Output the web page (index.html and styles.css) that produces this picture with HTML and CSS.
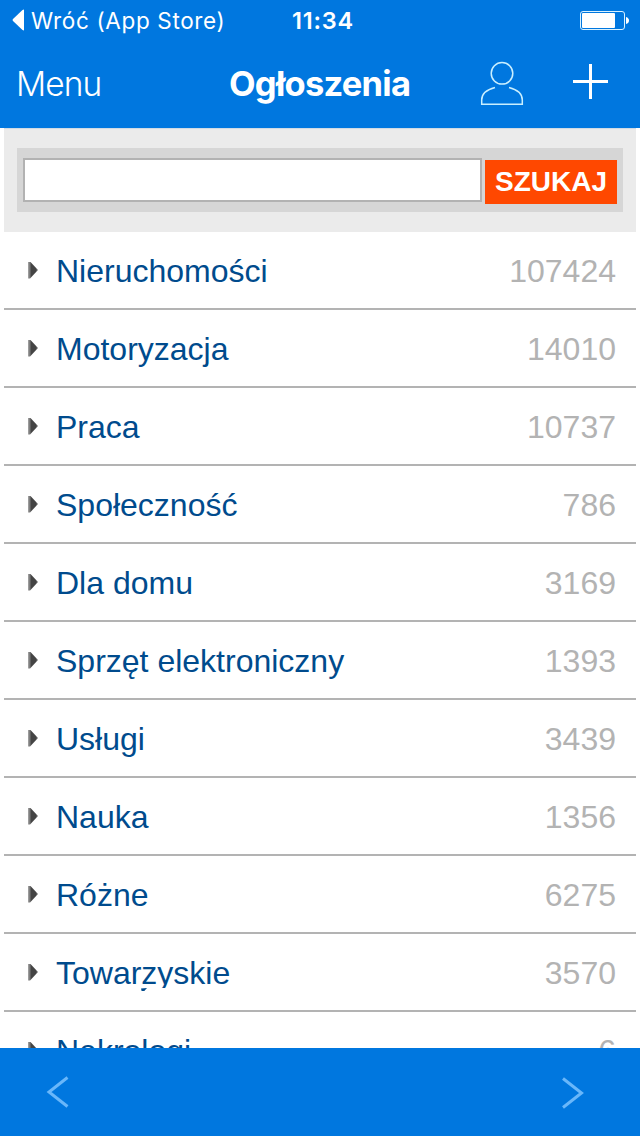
FILE: index.html
```html
<!DOCTYPE html>
<html lang="pl">
<head>
<meta charset="utf-8">
<title>Ogłoszenia</title>
<link rel="stylesheet" href="styles.css">
</head>
<body>
<div class="app">
  <header class="header">
    <div class="status">
      <div class="back"><svg width="12" height="22" viewBox="0 0 12 22"><path d="M12 .5v21L10.500 21 1 12q-1-1 0-2L10.500 1z" fill="#fff"/></svg><span class="back-text">Wróć (App Store)</span></div>
      <span class="time">11:34</span>
      <svg class="battery" width="50" height="20" viewBox="0 0 50 20"><rect x=".5" y=".5" width="44" height="18" rx="2.500" fill="none" stroke="#d8f1ff"/><rect x="2" y="2" width="33" height="15" rx="1" fill="#fff"/><path d="M46 6q3 1 3 3.500T46 13z" fill="#fff"/></svg>
    </div>
    <nav class="nav">
      <span class="menu">Menu</span>
      <h1 class="title">Ogłoszenia</h1>
      <div class="actions">
        <svg width="44" height="44" viewBox="0 0 44 44" fill="none" stroke="#c9efff" stroke-width="1.500"><circle cx="22" cy="12.300" r="10.800"/><path d="M15 26.500C7 28.500 1.700 33 1.700 39v4.200h40.600V39c0-6-5.300-10.500-13.300-12.500"/></svg>
        <svg width="36" height="36" viewBox="0 0 36 36" fill="none" stroke="#fff" stroke-width="3"><path d="M0 18.500h35M17.500 1v35"/></svg>
      </div>
    </nav>
  </header>
  <main class="content">
    <form class="search">
      <div class="search-box"><input class="field" type="text" aria-label="Szukaj"><button class="submit" type="button">SZUKAJ</button></div>
    </form>
    <ul class="list">
      <li class="row"><i class="arrow"></i><span class="name">Nieruchomości</span><span class="count">107424</span></li>
      <li class="row"><i class="arrow"></i><span class="name">Motoryzacja</span><span class="count">14010</span></li>
      <li class="row"><i class="arrow"></i><span class="name">Praca</span><span class="count">10737</span></li>
      <li class="row"><i class="arrow"></i><span class="name">Społeczność</span><span class="count">786</span></li>
      <li class="row"><i class="arrow"></i><span class="name">Dla domu</span><span class="count">3169</span></li>
      <li class="row"><i class="arrow"></i><span class="name">Sprzęt elektroniczny</span><span class="count">1393</span></li>
      <li class="row"><i class="arrow"></i><span class="name">Usługi</span><span class="count">3439</span></li>
      <li class="row"><i class="arrow"></i><span class="name">Nauka</span><span class="count">1356</span></li>
      <li class="row"><i class="arrow"></i><span class="name">Różne</span><span class="count">6275</span></li>
      <li class="row"><i class="arrow"></i><span class="name name-clipped"><span class="clip">Towarzyskie</span></span><span class="count">3570</span></li>
      <li class="row"><i class="arrow"></i><span class="name">Nekrologi</span><span class="count">6</span></li>
    </ul>
  </main>
  <footer class="toolbar">
    <svg width="24" height="34" viewBox="0 0 24 34" fill="none" stroke="#69b7fa" stroke-width="3"><path d="M21.500 2.500 3 17l18.500 14.500"/></svg>
    <svg class="next" width="24" height="34" viewBox="0 0 24 34" fill="none" stroke="#69b7fa" stroke-width="3"><path d="M2 2.500 20.500 17 2 31.500"/></svg>
  </footer>
</div>
</body>
</html>
```
FILE: styles.css
```css
* { box-sizing: border-box; }
body { margin: 0; background: #fff; font-family: "Liberation Sans", Arial, sans-serif; }
svg { display: block; flex: none; }
.app { display: flex; flex-direction: column; width: 640px; height: 1136px; overflow: hidden; }
.header { flex: none; height: 128px; background: #0077df; color: #fff; font-family: Inter, sans-serif; }
.status { display: grid; grid-template-columns: 280px 64px 1fr; align-items: center; height: 40px; padding-left: 12px; }
.back { display: flex; align-items: center; gap: 7px; }
.back-text { font-size: 22.5px; letter-spacing: .65px; white-space: nowrap; }
.time { font-size: 23.5px; font-weight: 600; letter-spacing: .8px; white-space: nowrap; }
.battery { margin: 1px 0 0 224px; }
.nav { display: grid; grid-template-columns: 212px 251px 1fr; align-items: center; height: 88px; padding-left: 17px; }
.menu { margin-left: -1px; font-size: 33.5px; font-weight: 350; letter-spacing: -.9px; line-height: 88px; }
.title { margin: 0; font-size: 34.5px; font-weight: 700; letter-spacing: -.75px; line-height: 84px; }
.actions { display: flex; align-items: center; gap: 49px; height: 88px; padding-bottom: 3px; }
.actions svg:last-child { margin-top: -4px; }
.content { flex: 1; min-height: 0; overflow: hidden; padding: 0 4px; }
.search { height: 104px; margin: 0; padding: 20px 13px; background: #ebebeb; border-top: 1px solid #d0dbe5; }
.search-box { display: flex; align-items: flex-start; gap: 3px; height: 64px; margin-top: -1px; padding: 10px 6px; background: #d6d6d6; }
.field { width: 459px; height: 44px; padding: 0 8px; border: 2px solid #b2b2b2; border-radius: 0; background: #fff; font: 32px "Liberation Sans", Arial, sans-serif; outline: none; }
.submit { width: 132px; height: 44px; margin: 2px 0 0; padding: 0; border: 0; background: #ff4800; color: #fff; font: bold 28px/44px "Liberation Sans", Arial, sans-serif; }
.list { margin: 0; padding: 0; list-style: none; }
.row { display: flex; align-items: center; height: 78px; padding: 2px 20px 0 24px; border-bottom: 2px solid #b3b3b3; font-size: 32px; line-height: 38px; }
.arrow { flex: none; width: 10px; height: 17px; margin: -2px 18px 0 0; background: linear-gradient(90deg, #aaa, #444 35%, #444 75%, #777); clip-path: polygon(0 0, 20% 0, 100% 50%, 20% 100%, 0 100%); }
.name { flex: 1; color: #004b8d; }
.count { color: #b3b3b3; }
.name-clipped { position: relative; }
.clip { display: block; height: 34px; margin-bottom: 4px; overflow: hidden; }
.name-clipped::after { content: ""; position: absolute; left: 85px; top: 34px; width: 6px; height: 3px; background: #004b8d; clip-path: polygon(0 20%, 100% 0, 55% 100%, 10% 100%); }
.toolbar { display: flex; flex: none; align-items: center; justify-content: space-between; height: 88px; padding: 0 55px 1px 46px; background: #0077df; }
.next { margin-top: 2px; }
```
